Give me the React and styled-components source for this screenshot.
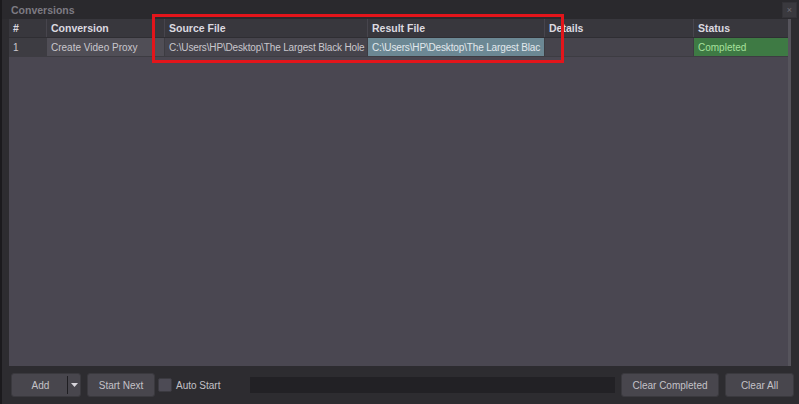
import styled, { createGlobalStyle } from "styled-components";

const GlobalStyle = createGlobalStyle`
  html, body {
    margin: 0;
    padding: 0;
    background: #2d2c30;
  }
  * {
    box-sizing: border-box;
  }
`;

const COLUMNS = "38px 118px 203px 177px 149px 94px";

const Window = styled.div`
  position: relative;
  width: 799px;
  height: 404px;
  background: #2d2c30;
  border-left: 2px solid #1b1a1d;
  font-family: "Liberation Sans", Arial, sans-serif;
  font-size: 10px;
  color: #c9c7cd;
  display: flex;
  flex-direction: column;
  overflow: hidden;
`;

const TitleBar = styled.div`
  height: 19px;
  display: flex;
  align-items: center;
  justify-content: space-between;
  padding: 0 2px 0 9px;
  background: #2a292d;
`;

const Title = styled.span`
  font-weight: bold;
  color: #7d7b83;
  font-size: 10.5px;
`;

const CloseButton = styled.div`
  width: 15px;
  height: 16px;
  background: #3a393e;
  border: 1px solid #333237;
  color: #6f6d74;
  font-size: 9px;
  line-height: 14px;
  text-align: center;
`;

const TablePanel = styled.div`
  margin: 0 8px 0 7px;
  flex: 1;
  background: #4a4751;
  border-right: 3px solid #56545c;
  display: flex;
  flex-direction: column;
`;

const Row = styled.div`
  display: grid;
  grid-template-columns: ${COLUMNS};
  height: 19px;
  background: ${({ $header }) => ($header ? "#38373d" : "#46444c")};
  border-bottom: 1px solid ${({ $header }) => ($header ? "#2f2e33" : "#3d3c42")};
`;

const Cell = styled.div`
  padding: 0 4px;
  display: flex;
  align-items: center;
  white-space: nowrap;
  overflow: hidden;
  border-right: 1px solid ${({ $header }) => ($header ? "#47454d" : "#3d3c42")};
  font-weight: ${({ $header }) => ($header ? "bold" : "normal")};
  font-size: ${({ $header }) => ($header ? "10.5px" : "10px")};
  letter-spacing: ${({ $path }) => ($path ? "-0.15px" : "0")};
  color: ${({ $header, $tone }) =>
    $header ? "#dcdae0" : $tone === "done" ? "#a6e19c" : $tone === "sel" ? "#e2e9ed" : "#c9c7cd"};
  background: ${({ $tone }) =>
    $tone === "done"
      ? "#3e7a44"
      : $tone === "sel"
      ? "#6c8894"
      : $tone === "num"
      ? "#3d3c42"
      : $tone === "lite"
      ? "#504e56"
      : "transparent"};

  &:last-child {
    border-right: none;
  }
`;

const Body = styled.div`
  flex: 1;
`;

const Toolbar = styled.div`
  height: 38px;
  display: flex;
  align-items: center;
  gap: 6px;
  padding: 0 5px 0 9px;
`;

const Button = styled.div`
  height: 24px;
  width: ${({ $w }) => $w}px;
  background: #48464d;
  border: 1px solid #3a393e;
  border-radius: 3px;
  display: flex;
  align-items: center;
  justify-content: center;
  color: #c4c2c8;
  font-size: 10px;
`;

const SplitButton = styled.div`
  height: 24px;
  width: 70px;
  background: #48464d;
  border: 1px solid #3a393e;
  border-radius: 3px;
  display: flex;
  align-items: center;
`;

const SplitLabel = styled.div`
  flex: 1;
  text-align: center;
  color: #c4c2c8;
  padding-left: 2px;
`;

const SplitArrow = styled.div`
  width: 13px;
  height: 18px;
  border-left: 1px solid #1f1e22;
  display: flex;
  align-items: center;
  justify-content: center;
`;

const Check = styled.label`
  display: flex;
  align-items: center;
  gap: 4px;
  color: #c4c2c8;
  margin-left: -3px;
`;

const Box = styled.span`
  width: 14px;
  height: 14px;
  background: #4d4b55;
  border: 1px solid #3b3a40;
  border-radius: 2px;
`;

const Progress = styled.div`
  flex: 1;
  height: 16px;
  margin-left: 24px;
  background: #222125;
`;

const Annotation = styled.div`
  position: absolute;
  left: 150px;
  top: 14px;
  width: 412px;
  height: 49px;
  border: 3px solid #e3151b;
  pointer-events: none;
`;

const source = "C:\\Users\\HP\\Desktop\\The Largest Black Hole";
const result = "C:\\Users\\HP\\Desktop\\The Largest Blac";

export default function App() {
  return (
    <>
      <GlobalStyle />
      <Window>
        <TitleBar>
          <Title>Conversions</Title>
          <CloseButton>×</CloseButton>
        </TitleBar>
        <TablePanel>
          <Row $header>
            <Cell $header>#</Cell>
            <Cell $header>Conversion</Cell>
            <Cell $header>Source File</Cell>
            <Cell $header>Result File</Cell>
            <Cell $header>Details</Cell>
            <Cell $header>Status</Cell>
          </Row>
          <Row>
            <Cell $tone="num">1</Cell>
            <Cell $tone="lite">Create Video Proxy</Cell>
            <Cell $path>{source}</Cell>
            <Cell $path $tone="sel">{result}</Cell>
            <Cell></Cell>
            <Cell $tone="done">Completed</Cell>
          </Row>
          <Body />
        </TablePanel>
        <Toolbar>
          <SplitButton>
            <SplitLabel>Add</SplitLabel>
            <SplitArrow>
              <svg width="7" height="4" viewBox="0 0 7 4">
                <path d="M0 0h7L3.5 4z" fill="#d8d6dc" />
              </svg>
            </SplitArrow>
          </SplitButton>
          <Button $w={68}>Start Next</Button>
          <Check>
            <Box />
            Auto Start
          </Check>
          <Progress />
          <Button $w={98}>Clear Completed</Button>
          <Button $w={69}>Clear All</Button>
        </Toolbar>
        <Annotation />
      </Window>
    </>
  );
}
